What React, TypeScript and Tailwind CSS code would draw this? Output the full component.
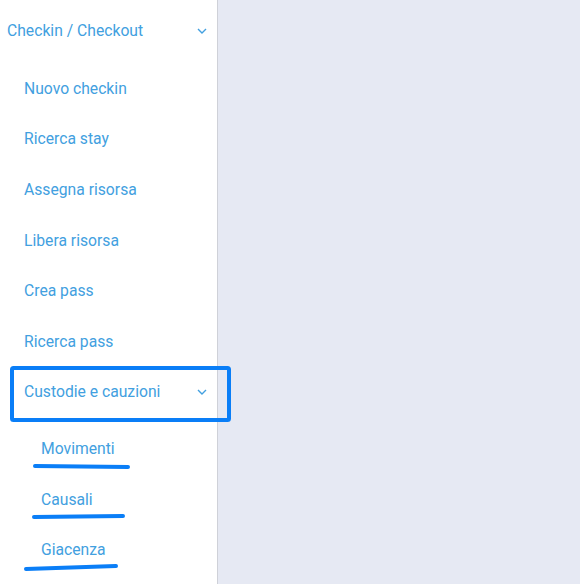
const items = ['Nuovo checkin', 'Ricerca stay', 'Assegna risorsa', 'Libera risorsa', 'Crea pass', 'Ricerca pass']
const subItems = ['Movimenti', 'Causali', 'Giacenza']

function Chevron() {
  return (
    <svg width="10" height="6" viewBox="0 0 10 6" className="shrink-0">
      <path d="M1 1l4 4 4-4" fill="none" stroke="#42a0e0" strokeWidth="1.4" />
    </svg>
  )
}

export default function App() {
  return (
    <div
      className="relative flex h-[584px] w-[580px] overflow-hidden bg-[#e6e9f3] text-[15.7px] text-[#42a0e0]"
      style={{ fontFamily: 'Roboto, "Liberation Sans", sans-serif' }}
    >
      {/* Sidebar */}
      <nav className="w-[218px] shrink-0 border-r border-[#cfd1d8] bg-white">
        <div className="mt-[6px] flex h-[50px] items-center justify-between pl-[7px] pr-[10px]">
          <span>Checkin / Checkout</span>
          <Chevron />
        </div>
        <ul className="mt-[7px]">
          {items.map((it) => (
            <li key={it} className="flex h-[50.67px] items-center pl-6">
              {it}
            </li>
          ))}
          <li className="flex h-[50.67px] items-center justify-between pl-6 pr-[10px]">
            <span>Custodie e cauzioni</span>
            <Chevron />
          </li>
        </ul>
        <ul className="mt-[6px]">
          {subItems.map((it) => (
            <li key={it} className="flex h-[50.67px] items-center pl-[41px]">
              {it}
            </li>
          ))}
        </ul>
      </nav>
      <main className="flex-1" />

      {/* Annotation marks */}
      <svg className="pointer-events-none absolute inset-0" width="580" height="584">
        <rect x="12" y="368" width="217" height="52" rx="1.5" fill="none" stroke="#0a7ef7" strokeWidth="4" />
        <g stroke="#0a7ef7" strokeWidth="4" strokeLinecap="round" fill="none">
          <path d="M35 466 L128 467" />
          <path d="M34 517 L123 516" />
          <path d="M26 569 L116 566" />
        </g>
      </svg>
    </div>
  )
}
